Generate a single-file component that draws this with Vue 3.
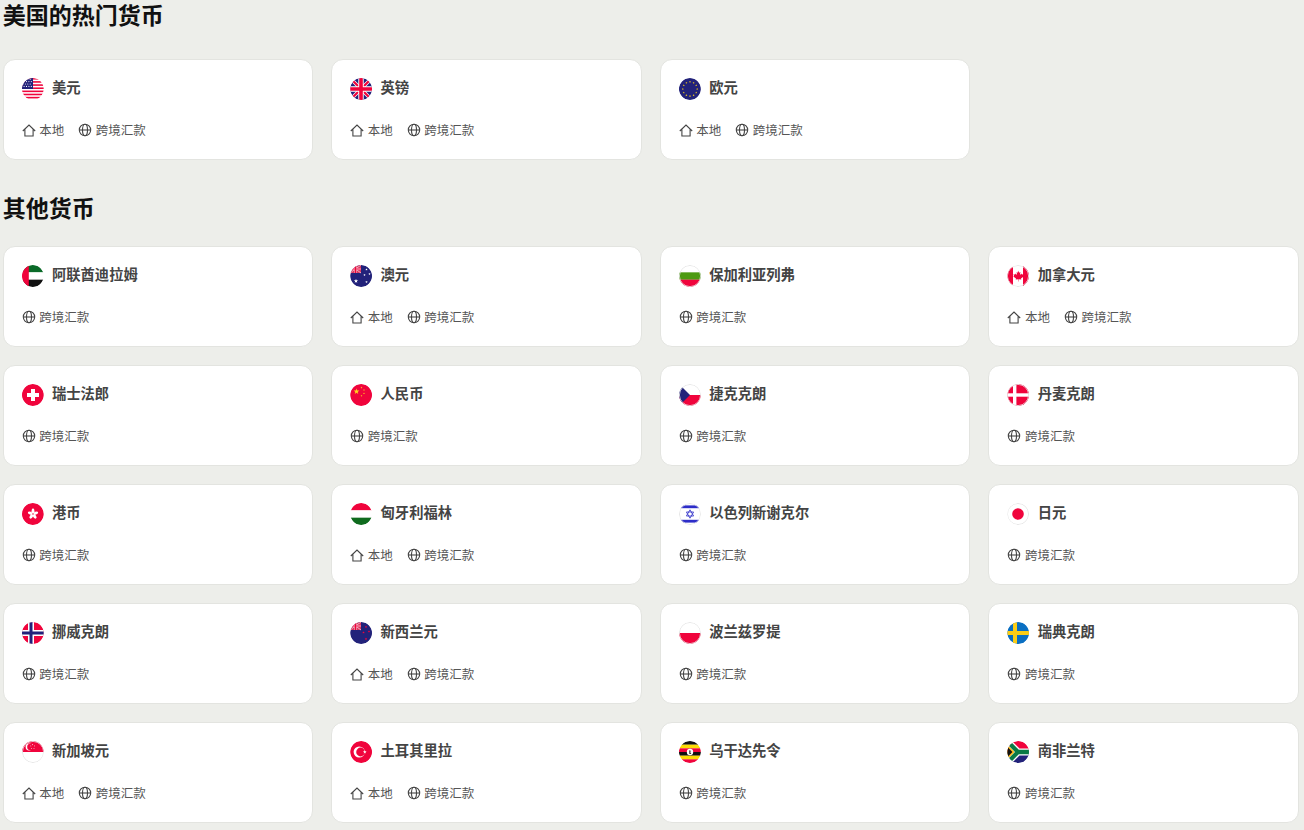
<script setup>
const ring = '<circle cx="11" cy="11" r="10.6" fill="none" stroke="#e4e4e4" stroke-width=".9"/>';

function star(cx, cy, r, fill) {
  const pts = [];
  for (let i = 0; i < 10; i++) {
    const a = -Math.PI / 2 + (i * Math.PI) / 5;
    const rad = i % 2 ? r * 0.42 : r;
    pts.push(`${(cx + rad * Math.cos(a)).toFixed(2)},${(cy + rad * Math.sin(a)).toFixed(2)}`);
  }
  return `<polygon points="${pts.join(' ')}" fill="${fill}"/>`;
}

function stripes(list) {
  const h = 22 / list.length;
  return list.map((c, i) => `<rect y="${i * h}" width="22" height="${h + 0.1}" fill="${c}"/>`).join('');
}

const navy = '#22227a';
const red = '#f0043c';

// small union jack canton for AU and NZ
const canton = `
  <rect width="11" height="8" fill="#d8375f"/>
  <path d="M0 0L11 8M11 0L0 8" stroke="#f3b4c4" stroke-width=".9"/>
  <path d="M5.5 0V8M0 4H11" stroke="#f6c8d3" stroke-width="2"/>
  <path d="M5.5 0V8M0 4H11" stroke="${red}" stroke-width="1.1"/>`;

const usStripes = Array.from({ length: 7 }, (_, i) =>
  `<rect y="${i * 3.14}" width="22" height="1.57" fill="${red}"/>`).join('');
const usDots = Array.from({ length: 16 }, (_, i) =>
  `<circle cx="${1 + (i % 4) * 2.4 + (Math.floor(i / 4) % 2) * 1.1}" cy="${1.2 + Math.floor(i / 4) * 2.4}" r=".55" fill="#fff"/>`).join('');

const euStars = Array.from({ length: 12 }, (_, i) => {
  const a = (i * Math.PI) / 6;
  return star(11 + 7.2 * Math.cos(a), 11 + 7.2 * Math.sin(a), 1.1, '#f7d117');
}).join('');

const flags = {
  us: `<rect width="22" height="22" fill="#fff"/>${usStripes}<rect width="11" height="11" fill="${navy}"/>${usDots}`,
  gb: `<rect width="22" height="22" fill="${navy}"/>
    <path d="M0 0L22 22M22 0L0 22" stroke="#fff" stroke-width="3.6"/>
    <path d="M0 0L22 22M22 0L0 22" stroke="${red}" stroke-width="2.2"/>
    <path d="M11 0V22M0 11H22" stroke="#fff" stroke-width="5.4"/>
    <path d="M11 0V22M0 11H22" stroke="${red}" stroke-width="3.6"/>`,
  eu: `<rect width="22" height="22" fill="${navy}"/>${euStars}`,
  ae: `${stripes(['#0a6a28', '#fff', '#111'])}<rect width="6.8" height="22" fill="${red}"/>`,
  au: `<rect width="22" height="22" fill="${navy}"/>${canton}
    ${star(6, 16, 2.2, '#fff')}${star(16.5, 4.5, 1.2, '#fff')}${star(19.5, 9, 1.2, '#fff')}${star(14.5, 10, 1.2, '#fff')}${star(16.5, 17, 1.3, '#fff')}`,
  bg: `${stripes(['#fff', '#4d9a12', red])}${ring}`,
  ca: `<rect width="22" height="22" fill="#fff"/><rect width="6" height="22" fill="${red}"/><rect x="16" width="6" height="22" fill="${red}"/>
    <path d="M11 5.5l1.2 2.2 1.2-.6-.5 3 1.6-1.5.4 1 1.6-.3-.5 1.7.7.4-2.7 2.2.3 1-2.6-.4V16.5h-.4v-2.3l-2.6.4.3-1-2.7-2.2.7-.4-.5-1.7 1.6.3.4-1 1.6 1.5-.5-3 1.2.6z" fill="${red}"/>${ring}`,
  ch: `<rect width="22" height="22" fill="${red}"/><path d="M9 5h4v4h4v4h-4v4H9v-4H5V9h4z" fill="#fff"/>`,
  cn: `<rect width="22" height="22" fill="${red}"/>${star(6.5, 7.5, 3, '#ffd21f')}${star(11.5, 3.6, 1, '#ffd21f')}${star(14, 6, 1, '#ffd21f')}${star(14, 9.4, 1, '#ffd21f')}${star(11.5, 11.8, 1, '#ffd21f')}`,
  cz: `<rect width="22" height="11" fill="#fff"/><rect y="11" width="22" height="11" fill="${red}"/><path d="M0 0L11 11L0 22z" fill="${navy}"/>${ring}`,
  dk: `<rect width="22" height="22" fill="${red}"/><rect x="6" width="3.4" height="22" fill="#fff"/><rect y="9.3" width="22" height="3.4" fill="#fff"/>${ring}`,
  hk: `<rect width="22" height="22" fill="${red}"/>${[0, 72, 144, 216, 288].map(a =>
    `<ellipse cx="11" cy="8.2" rx="1.5" ry="2.6" fill="#fff" transform="rotate(${a} 11 11)"/>`).join('')}<circle cx="11" cy="11" r=".7" fill="${red}"/>`,
  hu: `${stripes([red, '#fff', '#0f6b1e'])}`,
  il: `<rect width="22" height="22" fill="#fff"/><rect y="2.4" width="22" height="2.8" fill="#2d2dc8"/><rect y="16.8" width="22" height="2.8" fill="#2d2dc8"/>
    <path d="M11 6.8l3.6 6.2H7.4zM11 15.2L7.4 9h7.2z" fill="none" stroke="#2d2dc8" stroke-width=".8"/>${ring}`,
  jp: `<rect width="22" height="22" fill="#fff"/><circle cx="11" cy="11" r="5.8" fill="${red}"/>${ring}`,
  no: `<rect width="22" height="22" fill="${red}"/><rect x="6" width="6" height="22" fill="#fff"/><rect y="8" width="22" height="6" fill="#fff"/>
    <rect x="7.5" width="3" height="22" fill="${navy}"/><rect y="9.5" width="22" height="3" fill="${navy}"/>`,
  nz: `<rect width="22" height="22" fill="${navy}"/>${canton}
    ${star(16, 5, 1.3, red)}${star(19, 9.5, 1.3, red)}${star(13.5, 10.5, 1.3, red)}${star(16, 17, 1.4, red)}`,
  pl: `<rect width="22" height="11" fill="#fff"/><rect y="11" width="22" height="11" fill="${red}"/>${ring}`,
  se: `<rect width="22" height="22" fill="#0a6fc2"/><rect x="6" width="4" height="22" fill="#fbcd16"/><rect y="9" width="22" height="4" fill="#fbcd16"/>`,
  sg: `<rect width="22" height="11" fill="${red}"/><rect y="11" width="22" height="11" fill="#fff"/>
    <circle cx="7" cy="6" r="3.4" fill="#fff"/><circle cx="8.4" cy="6" r="3.2" fill="${red}"/>
    ${star(10.6, 3.6, .7, '#fff')}${star(12.6, 5, .7, '#fff')}${star(12, 7.4, .7, '#fff')}${star(9.4, 7.4, .7, '#fff')}${star(8.8, 5, .7, '#fff')}${ring}`,
  tr: `<rect width="22" height="22" fill="${red}"/><circle cx="9.2" cy="11" r="5.6" fill="#fff"/><circle cx="10.6" cy="11" r="4.4" fill="${red}"/>${star(14.8, 11, 1.9, '#fff')}`,
  ug: `${stripes(['#111', '#fcdc04', red, '#111', '#fcdc04', red])}<circle cx="11" cy="11" r="3.2" fill="#fff"/><path d="M10.2 9.2l1.6.5-.5 1.6 1 1.6h-2z" fill="#333"/>`,
  za: `<rect width="22" height="11" fill="${red}"/><rect y="11" width="22" height="11" fill="${navy}"/>
    <path d="M0 0L11 11L0 22M11 11H22" fill="none" stroke="#fff" stroke-width="7"/>
    <path d="M0 0L11 11L0 22M11 11H22" fill="none" stroke="#0a7a45" stroke-width="4.4"/>
    <path d="M0 3.5L7.5 11L0 18.5z" fill="#fbb816"/><path d="M0 5.6L5.4 11L0 16.4z" fill="#111"/>`,
};

const popular = [
  { name: '美元', flag: 'us', local: true },
  { name: '英镑', flag: 'gb', local: true },
  { name: '欧元', flag: 'eu', local: true },
];

const others = [
  { name: '阿联酋迪拉姆', flag: 'ae' },
  { name: '澳元', flag: 'au', local: true },
  { name: '保加利亚列弗', flag: 'bg' },
  { name: '加拿大元', flag: 'ca', local: true },
  { name: '瑞士法郎', flag: 'ch' },
  { name: '人民币', flag: 'cn' },
  { name: '捷克克朗', flag: 'cz' },
  { name: '丹麦克朗', flag: 'dk' },
  { name: '港币', flag: 'hk' },
  { name: '匈牙利福林', flag: 'hu', local: true },
  { name: '以色列新谢克尔', flag: 'il' },
  { name: '日元', flag: 'jp' },
  { name: '挪威克朗', flag: 'no' },
  { name: '新西兰元', flag: 'nz', local: true },
  { name: '波兰兹罗提', flag: 'pl' },
  { name: '瑞典克朗', flag: 'se' },
  { name: '新加坡元', flag: 'sg', local: true },
  { name: '土耳其里拉', flag: 'tr', local: true },
  { name: '乌干达先令', flag: 'ug' },
  { name: '南非兰特', flag: 'za' },
];

const sections = [
  { title: '美国的热门货币', items: popular, cls: 'first' },
  { title: '其他货币', items: others, cls: 'second' },
];
</script>

<template>
  <div class="page">
    <section v-for="s in sections" :key="s.title" :class="s.cls">
      <h2>{{ s.title }}</h2>
      <div class="grid">
        <div v-for="c in s.items" :key="c.name" class="card">
          <div class="head">
            <svg class="flag" viewBox="0 0 22 22" width="22" height="22" v-html="flags[c.flag]"></svg>
            <span class="name">{{ c.name }}</span>
          </div>
          <div class="tags">
            <span v-if="c.local" class="tag">
              <svg class="icon" viewBox="0 0 14 14" width="14" height="14" fill="none" stroke="#444" stroke-width="1.1">
                <path d="M.8 8L7 2l6.2 6M2.9 6.4V13h8.2V6.4" />
              </svg>
              本地
            </span>
            <span class="tag">
              <svg class="icon" viewBox="0 0 14 14" width="14" height="14" fill="none" stroke="#444" stroke-width="1.1">
                <circle cx="7" cy="7" r="5.7" />
                <ellipse cx="7" cy="7" rx="2.5" ry="5.7" />
                <path d="M1.3 7h11.4" />
              </svg>
              跨境汇款
            </span>
          </div>
        </div>
      </div>
    </section>
  </div>
</template>

<style>
body {
  background: #edeeea;
}
</style>

<style scoped>
.page {
  padding: 0 5px 7px 2.7px;
  font-family: "Noto Sans CJK SC", "Liberation Sans", sans-serif;
}
h2 {
  margin: 0;
  font-family: "Liberation Sans", "Noto Sans CJK SC", sans-serif;
  font-size: 23px;
  line-height: 33px;
  font-weight: 700;
  color: #111;
}
.first h2 {
  margin-bottom: 26px;
}
.second {
  margin-top: 33px;
}
.second h2 {
  margin-bottom: 20px;
}
.grid {
  display: grid;
  grid-template-columns: repeat(4, 1fr);
  gap: 18px;
}
.card {
  height: 101px;
  box-sizing: border-box;
  padding: 18px 18px;
  background: #fff;
  border: 1px solid #e3e4e0;
  border-radius: 12px;
}
.head {
  display: flex;
  align-items: center;
  gap: 8.3px;
  height: 22px;
}
.flag {
  flex: none;
  border-radius: 50%;
  clip-path: circle(50%);
}
.name {
  font-size: 14.3px;
  line-height: 20px;
  margin-bottom: 4px;
  font-weight: 700;
  color: #444;
}
.tags {
  display: flex;
  gap: 14px;
  margin-top: 19.5px;
  line-height: 20px;
}
.tag {
  display: flex;
  align-items: center;
  gap: 3.5px;
  font-size: 12.5px;
  color: #555;
}
.icon {
  flex: none;
  margin-top: 1px;
}
</style>
